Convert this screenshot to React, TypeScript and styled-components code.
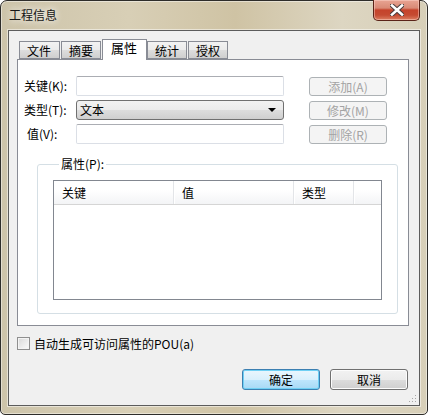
import React from 'react'
import styled, { createGlobalStyle } from 'styled-components'

const GlobalStyle = createGlobalStyle`
  html, body {
    margin: 0;
    padding: 0;
    background: #ffffff;
    overflow: hidden;
  }
  * {
    box-sizing: border-box;
  }
`

const font = `"Noto Sans CJK SC", "Liberation Sans", sans-serif`

const Window = styled.div`
  position: relative;
  width: 428px;
  height: 415px;
  border: 1px solid #2e2d2a;
  border-radius: 7px 7px 5px 5px;
  background: linear-gradient(90deg, #cdc4aa 0%, #d8cfb6 30%, #cfc3a4 55%, #ddd6c2 80%, #d7cfb8 100%);
  display: flex;
  flex-direction: column;
  font-family: ${font};
  font-size: 12px;
  color: #000;
  box-shadow: inset 0 0 0 1px rgba(255, 255, 255, 0.45);
`

const TitleBar = styled.div`
  height: 29px;
  display: flex;
  align-items: flex-start;
  justify-content: space-between;
`

const Title = styled.div`
  margin: 6px 0 0 8px;
  font-size: 12px;
  line-height: 16px;
  color: #151515;
  text-shadow: 0 0 6px rgba(255, 255, 255, 0.9), 0 0 10px rgba(255, 255, 255, 0.7);
`

const CloseButton = styled.div`
  width: 47px;
  height: 21px;
  margin: -1px 7px 0 0;
  border: 1px solid #5a2318;
  border-top: none;
  border-radius: 0 0 5px 5px;
  background: linear-gradient(180deg, #e8a493 0%, #d98a76 40%, #c5432b 50%, #c54a31 75%, #dc7f62 100%);
  box-shadow: inset 0 0 0 1px rgba(255, 220, 210, 0.45);
  display: flex;
  align-items: center;
  justify-content: center;
`

const Client = styled.div`
  margin: 0 7px 8px 7px;
  flex: 1;
  border: 1px solid #5c5c5c;
  background: #f0f0f0;
  display: flex;
  flex-direction: column;
  position: relative;
  box-shadow: 0 0 0 1px rgba(255, 255, 255, 0.5);
`

const TabStrip = styled.div`
  display: flex;
  align-items: flex-end;
  height: 20px;
  margin: 8px 0 0 10px;
  position: relative;
  z-index: 2;
`

const Tab = styled.div<{ $active?: boolean; $w: number }>`
  width: ${p => p.$w}px;
  height: ${p => (p.$active ? 21 : 18)}px;
  margin-right: ${p => (p.$active ? 0 : 1)}px;
  margin-bottom: ${p => (p.$active ? -1 : 0)}px;
  border: 1px solid #898c95;
  border-bottom: ${p => (p.$active ? 'none' : '1px solid #898c95')};
  background: ${p =>
    p.$active ? '#ffffff' : 'linear-gradient(180deg, #f2f2f2 0%, #ebebeb 50%, #dddddd 51%, #cfcfcf 100%)'};
  padding-left: ${p => (p.$active ? 8 : 7)}px;
  line-height: ${p => (p.$active ? 16 : 17)}px;
  font-size: ${p => (p.$active ? 13 : 12)}px;
`

const Panel = styled.div`
  margin-left: 8px;
  width: 392px;
  height: 267px;
  border: 1px solid #898c95;
  background: #ffffff;
  padding: 16px 0 0 6px;
  display: flex;
  flex-direction: column;
`

const Form = styled.div`
  display: grid;
  grid-template-columns: 52px 208px 78px;
  grid-auto-rows: 20px;
  column-gap: 0;
  row-gap: 4px;
  align-items: center;
`

const Label = styled.div<{ $indent?: number }>`
  padding-left: ${p => p.$indent ?? 0}px;
  line-height: 20px;
`

const TextBox = styled.div`
  height: 20px;
  border: 1px solid #dbdfe6;
  border-top-color: #abadb3;
  border-radius: 2px;
  background: #ffffff;
`

const Combo = styled.div`
  height: 20px;
  border: 1px solid #707070;
  border-radius: 3px;
  background: linear-gradient(180deg, #f2f2f2 0%, #ebebeb 50%, #dddddd 51%, #cfcfcf 100%);
  display: flex;
  align-items: center;
  justify-content: space-between;
  padding: 0 7px 0 3px;
  line-height: 18px;
`

const Arrow = styled.div`
  width: 0;
  height: 0;
  border-left: 4px solid transparent;
  border-right: 4px solid transparent;
  border-top: 4px solid #000;
`

const SideButton = styled.div`
  margin-left: 25px;
  width: 78px;
  height: 19px;
  margin-top: 1px;
  border: 1px solid #adb2b5;
  border-radius: 3px;
  background: #f4f4f4;
  color: #a3a3a3;
  text-align: center;
  line-height: 17px;
`

const GroupBox = styled.fieldset`
  margin: 12px 0 0 13px;
  width: 361px;
  height: 158px;
  padding: 8px 14px 0 15px;
  border: 1px solid #d5dfe5;
  border-radius: 3px;
  min-width: 0;
`

const Legend = styled.legend`
  margin-left: 6px;
  padding: 0 2px;
  line-height: 16px;
  font-size: 12px;
`

const List = styled.div`
  width: 329px;
  height: 120px;
  border: 1px solid #828790;
  background: #ffffff;
  display: flex;
  flex-direction: column;
`

const Header = styled.div`
  display: flex;
  height: 24px;
  border-bottom: 1px solid #d5d5d5;
  background: linear-gradient(180deg, #ffffff 0%, #ffffff 40%, #f3f4f6 100%);
`

const HeaderCell = styled.div<{ $w?: number }>`
  width: ${p => (p.$w ? `${p.$w}px` : 'auto')};
  flex: ${p => (p.$w ? 'none' : '1')};
  border-right: ${p => (p.$w ? '1px solid #e3e5e8' : 'none')};
  box-shadow: ${p => (p.$w ? '1px 0 0 #ffffff' : 'none')};
  padding-left: 8px;
  line-height: 23px;
  font-size: 12px;
`

const CheckRow = styled.div`
  display: flex;
  align-items: center;
  margin: 11px 0 0 8px;
  gap: 4px;
  height: 13px;
`

const CheckBox = styled.div`
  width: 13px;
  height: 13px;
  border: 1px solid #8f8f8f;
  background: linear-gradient(135deg, #d8d8d8 0%, #eeeeee 60%, #fbfbfb 100%);
  box-shadow: inset 0 0 0 1px #f4f4f4;
`

const ButtonRow = styled.div`
  display: flex;
  justify-content: flex-end;
  gap: 10px;
  margin: 19px 11px 0 0;
`

const DialogButton = styled.div<{ $default?: boolean }>`
  width: 78px;
  height: 21px;
  border: 1px solid ${p => (p.$default ? '#3c7fb1' : '#707070')};
  border-radius: 3px;
  background: ${p =>
    p.$default
      ? 'linear-gradient(180deg, #eaf6fd 0%, #d9f0fc 50%, #bee6fd 51%, #a7d9f5 100%)'
      : 'linear-gradient(180deg, #f2f2f2 0%, #ebebeb 50%, #dddddd 51%, #cfcfcf 100%)'};
  box-shadow: ${p => (p.$default ? 'inset 0 0 0 1px #6fd0f4' : 'inset 0 0 0 1px #fcfcfc')};
  text-align: center;
  line-height: 19px;
`

const Grip = styled.svg`
  position: absolute;
  right: 2px;
  bottom: 2px;
`

function CloseGlyph() {
  return (
    <svg width="14" height="12" viewBox="0 0 14 12">
      <path
        d="M2 1.5 L12 10.5 M12 1.5 L2 10.5"
        stroke="#4a3b3b"
        strokeWidth="4.6"
        strokeLinecap="square"
        fill="none"
      />
      <path
        d="M2 1.5 L12 10.5 M12 1.5 L2 10.5"
        stroke="#ffffff"
        strokeWidth="2.6"
        strokeLinecap="square"
        fill="none"
      />
    </svg>
  )
}

function App() {
  return (
    <>
      <GlobalStyle />
      <Window>
        <TitleBar>
          <Title>工程信息</Title>
          <CloseButton>
            <CloseGlyph />
          </CloseButton>
        </TitleBar>
        <Client>
          <TabStrip>
            <Tab $w={41}>文件</Tab>
            <Tab $w={40}>摘要</Tab>
            <Tab $w={45} $active>属性</Tab>
            <Tab $w={40}>统计</Tab>
            <Tab $w={40}>授权</Tab>
          </TabStrip>
          <Panel>
            <Form>
              <Label>关键(K):</Label>
              <TextBox />
              <SideButton>添加(A)</SideButton>
              <Label>类型(T):</Label>
              <Combo>
                <span>文本</span>
                <Arrow />
              </Combo>
              <SideButton>修改(M)</SideButton>
              <Label $indent={3}>值(V):</Label>
              <TextBox />
              <SideButton>删除(R)</SideButton>
            </Form>
            <GroupBox>
              <Legend>属性(P):</Legend>
              <List>
                <Header>
                  <HeaderCell $w={120}>关键</HeaderCell>
                  <HeaderCell $w={120}>值</HeaderCell>
                  <HeaderCell $w={60}>类型</HeaderCell>
                  <HeaderCell />
                </Header>
              </List>
            </GroupBox>
          </Panel>
          <CheckRow>
            <CheckBox />
            <span>自动生成可访问属性的POU(a)</span>
          </CheckRow>
          <ButtonRow>
            <DialogButton $default>确定</DialogButton>
            <DialogButton>取消</DialogButton>
          </ButtonRow>
          <Grip width="8" height="8" viewBox="0 0 8 8">
            <rect x="6" y="0" width="1" height="1" fill="#a7a7a7" />
            <rect x="3" y="3" width="1" height="1" fill="#a7a7a7" />
            <rect x="6" y="3" width="1" height="1" fill="#a7a7a7" />
            <rect x="0" y="6" width="1" height="1" fill="#a7a7a7" />
            <rect x="3" y="6" width="1" height="1" fill="#a7a7a7" />
            <rect x="6" y="6" width="1" height="1" fill="#a7a7a7" />
          </Grip>
        </Client>
      </Window>
    </>
  )
}

export default App
